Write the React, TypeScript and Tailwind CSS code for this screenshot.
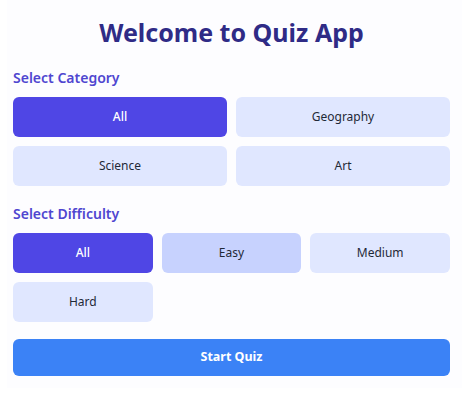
import React, { useState } from "react";

const categories = ["All", "Geography", "Science", "Art"];
const difficulties = ["All", "Easy", "Medium", "Hard"];

export default function App() {
  const [cat, setCat] = useState("All");
  const [diff, setDiff] = useState("All");
  return (
    <div className="min-h-[413px] w-[471px] bg-white" style={{ fontFamily: '"Noto Sans", "Open Sans", sans-serif' }}>
      <div className="ml-[7px] w-[455px] bg-[#fdfdff] pl-[6px] pr-[12px] pt-[16px] pb-[12px]">
        <h1 className="text-center text-[25px] leading-[32px] font-bold text-[#2f2b86] mb-[19px]">
          Welcome to Quiz App
        </h1>
        <h2 className="text-[14px] leading-[22px] font-semibold text-[#4f46d0] mb-[8px]">Select Category</h2>
        <div className="grid grid-cols-2 gap-[9px]">
          {categories.map((c) => (
            <button
              key={c}
              onClick={() => setCat(c)}
              className={
                c === cat
                  ? "h-[40px] rounded-md bg-[#4f46e5] text-white text-[12px] font-medium"
                  : "h-[40px] rounded-md bg-[#e0e7ff] text-[#1f2937] text-[12px]"
              }
            >
              {c}
            </button>
          ))}
        </div>
        <h2 className="mt-[17px] text-[14px] leading-[22px] font-semibold text-[#4f46d0] mb-[8px]">Select Difficulty</h2>
        <div className="grid grid-cols-3 gap-[9px]">
          {difficulties.map((d) => (
            <button
              key={d}
              onClick={() => setDiff(d)}
              className={
                d === diff
                  ? "h-[40px] rounded-md bg-[#4f46e5] text-white text-[12px] font-medium"
                  : d === "Easy"
                  ? "h-[40px] rounded-md bg-[#c7d2fe] text-[#1f2937] text-[12px]"
                  : "h-[40px] rounded-md bg-[#e0e7ff] text-[#1f2937] text-[12px]"
              }
            >
              {d}
            </button>
          ))}
        </div>
        <button className="mt-[17px] h-[37px] w-full rounded-md bg-[#3b82f6] text-white text-[12.5px] font-bold">
          Start Quiz
        </button>
      </div>
    </div>
  );
}
